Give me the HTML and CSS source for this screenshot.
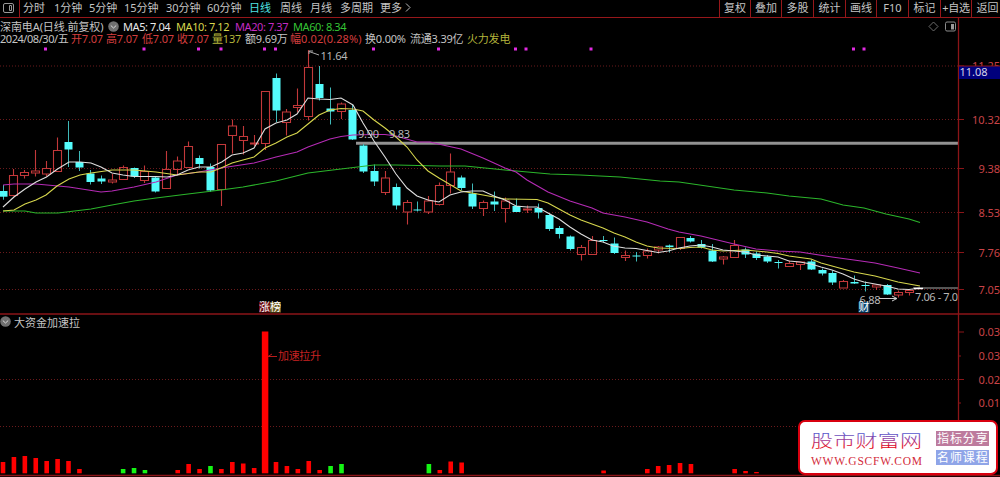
FILE: index.html
```html
<!DOCTYPE html>
<html lang="zh-CN">
<head>
<meta charset="utf-8">
<title>深南电A 日线</title>
<link rel="stylesheet" href="styles.css">
</head>
<body>
<header class="toolbar">
  <div class="panel-toggle"><svg width="12" height="11" viewBox="0 0 12 11"><rect x=".5" y=".5" width="10" height="9" rx="1.5" fill="none" stroke="#999"/><path d="M6.500 2.500h2v5h-2z" fill="none" stroke="#999"/></svg></div>
  <nav class="periods">
    <span class="w31">分时</span><span class="w35">1分钟</span><span class="w35">5分钟</span><span class="w42">15分钟</span><span class="w41">30分钟</span><span class="w42">60分钟</span><span class="w31 active">日线</span><span class="w30">周线</span><span class="w30">月线</span><span class="w40">多周期</span><span class="more">更多<svg width="6" height="9" viewBox="0 0 6 9"><path d="M1 .5l4 4-4 4" fill="none" stroke="#bbb"/></svg></span>
  </nav>
  <div class="tools"><span>复权</span><span>叠加</span><span>多股</span><span>统计</span><span>画线</span><span>F10</span><span>标记</span><span class="pick">+自选</span><span class="last">返回</span></div>
</header>
<main class="board">
  <svg class="chart" width="1000" height="459" viewBox="0 18 1000 459">
    <g id="grid"></g>
    <path d="M356 143.2H958" stroke="#929292" stroke-width="3"/>
    <g id="candles"></g>
    <g class="ma">
      <polyline stroke="#2bb52b" points="3,211 25,211 36,213 58,213 91,209 112,205 134,201 156,198 188,194 221,190 243,187 276,181 308,173 341,169 374,165 396,165 440,166 465,166 505,170 550,174 580,175 620,177 660,181 679,182 734,190 767,193 789,196 821,199 843,205 864,208 886,214 909,219 920,222.5"/>
      <polyline stroke="#b52bb5" points="3,185 14,184 36,184 69,187 101,192 112,191 134,187 156,182 177,175 199,172 221,168 254,163 276,157 297,152 308,147 330,139 341,136.5 353,135 374,134.5 385,134.5 396,136 417,142 430,142 445,145.5 461,149 483,158 505,168 516,172 527,180 548,192 570,201 592,208 603,213 625,217 647,222 668,229 679,232 701,236 734,244 756,249 778,251 800,252 832,257 854,260 875,263 898,268 920,273"/>
      <polyline stroke="#d6d64d" points="3,211 14,210 25,204 36,200 46,195 57,186 69,179 80,175 91,173 112,170 134,170 156,172 177,175 199,172 211,172 221,168 232,163 243,160 254,157 265,148 276,143 287,137 297,133 308,124 319,115 330,110 341,108.5 353,109 363,111 374,120 385,128 396,137 407,147 417,160 428,171 439,178 450,184.5 461,191 483,195 505,199 537,199.5 548,203 559,209 570,215 581,220 603,228 614,233 625,237 636,242 647,246 658,248 679,248.5 690,247.5 701,247 712,250 723,251 745,250 767,252 778,253.5 789,256 811,259 821,263 832,266 843,269 854,272 875,276 898,282 920,286"/>
      <polyline stroke="#dedede" points="3,207 14,197 25,189 36,182 46.5,177 57.5,169 69,162 80,162 91,163 101,167 112,173 123,175 134,176.5 156,176.5 167,177 177,175 188,170 199,167 211,167 221.7,162 232,155 243,153 254,148 265,129 276,123 287,120 297,114 308,98 319,99 330,99.5 341,98 353,105 363,123 374,141 385,157 396,174 407,188 417,196 428,200 439,202 450,195 461,192 472,191 483,191 494,196 505,200 516,206 527,207 537,207 548,213 559,219 570,227 581,234 592,240 603,242 613,246 625,248 636,248.5 647,250.5 658,252.5 668,251 679,248 690,246 701,245 712,247 723,250 734,251 745,252 756,255 767,256 778,257 789,261 800,262 811,264 821,267 832,270 843,274 854,279 864,282 875,284 886,286 898,289 909,289.5 920,288"/>
    </g>
    <path d="M913 288H958" stroke="#aaa"/>
    <path d="M914 288.5H923" stroke="#fff" stroke-width="1.5"/>
    <g id="dots" fill="#e22be2"></g>
    <g class="note">
      <path d="M319 55L309 51.5M309 54V51H313" fill="none" stroke="#aaa"/>
      <text x="320.500" y="60" textLength="27">11.64</text>
      <text x="358" y="138" textLength="21">9.90</text>
      <text x="389" y="138" textLength="21">9.83</text>
      <text x="859.500" y="303.500" textLength="21">6.88</text>
      <path d="M879 298.500H897M892 296l5 2.500-5 2.500" fill="none" stroke="#ccc"/>
      <text x="915" y="301" textLength="43">7.06 - 7.0</text>
    </g>
    <rect x="259" y="302" width="11" height="10.500" fill="#6c0d12"/><rect x="270" y="302" width="11" height="10.500" fill="#6c5a20"/>
    <text class="tag" x="259" y="311">涨</text><text class="tag" x="270" y="311">榜</text>
    <rect x="858.500" y="302" width="11" height="10.500" fill="#0c4b75"/><text class="tag" x="858.500" y="311">财</text>
    <g id="bars"></g>
    <path d="M268 356.500H277M272 354l-4 2.500" fill="none" stroke="#b81c1c"/>
    <text class="signal" x="278" y="359.500" textLength="43">加速拉升</text>
    <g id="axis"></g>
    <path d="M0 314H1000M0 475.500H1000M958.500 18V475" stroke="#8b1518" stroke-width="1.300" fill="none"/>
    <rect x="959" y="66" width="41" height="13" fill="#00007c"/>
    <path d="M959 66H1000" stroke="#8b1518"/>
    <text class="cursor" x="959.500" y="76" textLength="28">11.08</text>
    <path d="M933.500 22l4.500 4.500-4.500 4.500-4.500-4.500z" fill="none" stroke="#6d6d6d"/>
    <rect x="945.500" y="22" width="10" height="9" rx="1.500" fill="none" stroke="#8b8b8b"/><path d="M951 24h3v5.500h-3z" fill="#999"/>
  </svg>
  <div class="info">
    <div class="row">
      <span class="name">深南电A(日线.前复权)</span>
      <svg class="chev" width="11" height="11" viewBox="0 0 11 11"><circle cx="5.500" cy="5.500" r="5.300" fill="#707070"/><path d="M2.800 4.500l2.700 2.500 2.700-2.500" fill="none" stroke="#ddd"/></svg>
      <span class="ma5">MA5: 7.04</span><span class="ma10">MA10: 7.12</span><span class="ma20">MA20: 7.37</span><span class="ma60">MA60: 8.34</span>
    </div>
    <div class="row quote">
      <span class="w71 date">2024/08/30/五</span><span class="w35 up">开7.07</span><span class="w36 up">高7.07</span><span class="w35 up">低7.07</span><span class="w35 up">收7.07</span><span class="w33 vol">量137</span><span class="w45">额9.69万</span><span class="w75 up wide">幅0.02(0.28%)</span><span class="w45">换0.00%</span><span class="w57">流通3.39亿</span><span class="vol">火力发电</span>
    </div>
  </div>
  <div class="subtitle"><svg width="11" height="11" viewBox="0 0 11 11"><circle cx="5.500" cy="5.500" r="5.300" fill="#707070"/><path d="M2.800 4.500l2.700 2.500 2.700-2.500" fill="none" stroke="#ddd"/></svg><span>大资金加速拉</span></div>
  <aside class="brand">
    <svg class="brand-name" width="114" height="42" viewBox="0 0 114 42">
      <defs><linearGradient id="ink" gradientUnits="userSpaceOnUse" x1="0" y1="3" x2="0" y2="19"><stop offset="0" stop-color="#4a5cd8"/><stop offset=".5" stop-color="#a03a96"/><stop offset=".9" stop-color="#e00a20"/></linearGradient></defs>
      <g transform="scale(1.29 1)"><text class="cn" x="0" y="17.500" textLength="86" fill="url(#ink)">股市财富网</text></g>
      <text class="url" x="0" y="36" textLength="111">WWW.GSCFW.COM</text>
    </svg>
    <div class="badges"><span class="share">指标分享</span><span class="course">名师课程</span></div>
  </aside>
</main>
<script src="chart.js"></script>
</body>
</html>
```

FILE: styles.css
```css
* { box-sizing: border-box; }
body { margin: 0; width: 1000px; height: 477px; overflow: hidden; background: #000; color: #c4c4c4; font: 11px/13px "Noto Sans", "Noto Sans CJK SC", sans-serif; }
span { white-space: nowrap; }
.toolbar { display: flex; height: 18px; border-bottom: 1px solid #96171a; }
.panel-toggle { width: 20px; padding: 3px 0 0 3px; border-right: 1px solid #96171a; }
.panel-toggle svg { display: block; }
.periods { display: flex; flex: 1; padding: 1px 0 0 3px; line-height: 14px; }
.active { color: #4fe3e3; }
.more svg { margin-left: 3px; }
.tools { display: grid; grid-template-columns: 31px 31px 32px 32px 31px 32px 32px 31px 29px; width: 281px; line-height: 16px; text-align: center; }
.tools span { border-left: 1px solid #96171a; }
.tools .pick { letter-spacing: -.2px; }
.tools .last { padding-left: 3px; }
.w30 { width: 30px; } .w31 { width: 31px; } .w33 { width: 33px; } .w35 { width: 35px; } .w36 { width: 36px; }
.w40 { width: 40px; } .w41 { width: 41px; } .w42 { width: 42px; } .w45 { width: 45px; } .w57 { width: 57px; }
.w71 { width: 71px; } .w75 { width: 75px; }
.board { position: relative; height: 459px; }
.chart { position: absolute; left: 0; top: 0; }
.info { position: relative; height: 296px; padding-top: 2px; }
.row { display: flex; height: 13px; }
.name { width: 108px; letter-spacing: -.1px; }
.chev { margin: 1px 4px 0 0; }
.ma5, .ma10, .ma20, .ma60 { letter-spacing: -.42px; }
.ma5 { width: 53px; color: #e8e8e8; }
.ma10 { width: 59px; color: #d6d64d; }
.ma20 { width: 58px; color: #c42bc4; }
.ma60 { color: #35c435; }
.quote { letter-spacing: -.2px; padding-bottom: 1px; line-height: 12px; }
.date { letter-spacing: -.45px; }
.wide { letter-spacing: .1px; }
.up { color: #d33e3e; }
.vol { color: #b5b53b; }
.subtitle { position: relative; display: flex; gap: 3px; padding-top: 2px; }
.ma polyline { fill: none; stroke-width: 1.1; }
.note text { fill: #b7b7b7; }
.tag { fill: #fff; font-size: 11px; }
.signal { fill: #c92222; }
.cursor { fill: #d5d5e8; }
.tick-label { fill: #c94347; }
.brand { position: absolute; left: 798px; top: 402px; width: 200px; height: 55px; display: flex; padding: 7px 7px 0 11px; background: #fff; border: 2px solid #d9000f; border-radius: 7px; }
.brand-name { width: 114px; margin-right: 11px; overflow: visible; }
.cn { font: 300 17px "Noto Sans CJK SC", sans-serif; }
.url { font: 11.5px "Liberation Serif", serif; fill: #d32b3b; }
.badges { display: flex; flex-direction: column; gap: 4px; padding-top: 2px; }
.badges span { width: 53px; height: 15px; color: #fff; font: 12px/14px "Noto Sans CJK SC", sans-serif; letter-spacing: .9px; padding-left: 1px; }
.share { background: #bd7b9d; }
.course { background: #8fa5e8; }
```

FILE: chart.js
```js
const NS = "http://www.w3.org/2000/svg";
const STEP = 10.92;
const xOf = i => 3 + STEP * i;

function add(parent, tag, attrs, text) {
  const el = document.createElementNS(NS, tag);
  for (const k in attrs) el.setAttribute(k, attrs[k]);
  if (text) el.textContent = text;
  document.getElementById(parent).appendChild(el);
}

// Grid lines and price scale
[[66, "11.25"], [119.5, "10.32"], [168.5, "9.38"], [212.5, "8.53"], [252.5, "7.76"], [289.5, "7.05"], [379.5, ""], [426.5, ""]].forEach(([y, label]) => {
  add("grid", "path", { d: `M0 ${y}H958`, stroke: "#6b1a1c", "stroke-dasharray": "1 2" });
  if (label) {
    add("axis", "path", { d: `M958 ${y}h6`, stroke: "#8b1518" });
    const wide = label.length > 4;
    add("axis", "text", { class: "tick-label", x: wide ? 972 : 978.5, y: y + 4, textLength: wide ? 28 : 21.5 }, label);
  }
});
[[332, "0.03", 6], [356, "0.03", 3], [379.5, "0.02", 6], [403, "0.01", 3]].forEach(([y, label, len]) => {
  add("axis", "path", { d: `M958 ${y}h${len}`, stroke: "#8b1518" });
  add("axis", "text", { class: "tick-label", x: 978.5, y: y + 4, textLength: 21.5 }, label);
});

// Candles: direction, high, body top, body bottom, low
const candles = `c 185 191 196.7 199.7|r 169 175.5 195.5 196.5|r 170 172.5 175.5 178.5|r 150 171 173 176.5|r 161 168.5 174 176.5|r 137.5 150.5 171.5 172|c 121 142 149.5 167|c 151 162 167.5 171|c 170 173.5 182 184.5|c 175.5 178.5 181.5 184|r 174 180 182 183.5|r 165.5 167.5 179.5 180|c 167.5 168 176.5 178|r 165.5 171.5 180.5 183|c 176.5 177.5 191.5 192.5|r 151 169.5 188.5 189|r 156.5 161 169.5 174|r 141.5 146.5 167.5 168|c 155.5 158 164 168.5|c 163.5 167 190.5 192|r 144.5 144.5 189.5 206|r 119.5 126 135.5 153.5|r 126 136.5 140.5 154.5|r 135 143 144 146|r 91.5 91.5 143.5 150|c 73.5 78 110.5 122|r 109 112 122.5 135.5|r 88.5 105.5 107.5 112.5|r 50 67.5 116.5 120.5|c 66 84 98 100.5|c 87.5 108.5 111.5 124.5|r 102.5 104 111.5 119|c 105 110 139.5 140|c 144 145.5 171.5 173|c 164.5 171 181.5 186|r 171 178 192.5 195|c 183.5 187 205.5 209.5|r 200 202.5 212 224.5|c 201.5 209.5 210.5 211.5|r 196 201 212 214|r 182.5 185.5 204.5 205.5|r 153.5 172 185.5 193.5|c 175.5 177.5 188 190.5|c 183.5 193.5 206.5 209|r 200.5 202.5 208.5 216|c 191.5 201.5 204.5 211|r 197.5 201 208.5 222.5|c 198.5 206 212 212|r 205.5 209 210 213|c 203.5 208 212.5 218.5|c 213.5 215 229 231|c 226 228 234 238.5|c 235.5 236.5 249 250.5|r 245 247.5 254.5 260.5|r 236 240.5 254.5 254.5|c 236 240 241 242.5|c 237.5 243.5 253 254|r 250.5 255.5 257.5 261|c 252 255.5 256.5 261.5|r 248.5 251 255.5 258.5|r 246 247 250 253.5|c 244.5 245.5 247 252.5|r 237.5 237.5 248.5 250|c 236 238 241.5 242.5|c 240 244 247.5 248.5|c 244 250.5 261.5 262|r 256 257 259 264.5|r 240 245.5 257.5 258|c 247.5 249.5 254.5 258|c 251.5 253.5 258 260|c 255 256.5 261.5 263|c 260 262 263 268.5|r 260.5 263.5 266.5 267|r 261.5 262 264.5 270|c 260 261.5 269.5 270|c 268.5 270 273.5 275.5|c 270.5 273 282.5 285|r 280 281.5 288 288.5|c 275.5 282 283.5 284|c 281.5 285 286 291.5|r 284 285 287 290|c 284 285 294.5 295|r 290.5 292.5 295 297.5|r 289.5 290.5 292.5 295.5`;
candles.split("|").forEach((row, i) => {
  const [dir, ...v] = row.split(" ");
  const [high, top, bottom, low] = v.map(Number);
  const x = Math.round(xOf(i) - 0.5) + 0.5;
  if (dir === "c") {
    add("candles", "path", { d: `M${x} ${high}V${low}`, stroke: "#3fb9b9" });
    add("candles", "rect", { x: x - 4, y: top, width: 8, height: bottom - top, fill: "#54fcfc" });
  } else {
    add("candles", "path", { d: `M${x} ${high}V${top}M${x} ${bottom}V${low}M${x - 4} ${top}h8V${bottom}h-8z`, stroke: "#c2383a", fill: "none", "stroke-width": 1.1 });
  }
});

// Marker dots
[45.5, 144, 198.5, 221, 264.5, 275.5, 373.5, 438.5, 515.5, 526, 591, 853.5, 864].forEach(x =>
  add("dots", "rect", { x: x - 1.5, y: 47.5, width: 3, height: 3 }));

// Indicator bars: candle index, top, colour
const bars = "0 462 r|1 457 r|2 456 r|3 458 r|4 461 r|5 459 r|6 461 r|7 469 r|11 469 g|12 468 g|13 470 g|16 470 r|17 464 r|18 469 r|19 466 g|20 469 r|21 462 r|22 463.5 r|23 468 r|24 331.5 r|25 462 r|26 466 r|27 469 r|28 461 r|29 470 r|30 466 g|31 464 g|39 464 g|40 470 r|41 461.5 r|42 462.5 r|55 470.5 r|59 469 r|60 466 r|61 465 r|62 463 r|63 464 r|67 469 r|68 471 r|69 472 r";
bars.split("|").forEach(row => {
  const [i, top, c] = row.split(" ");
  const w = i === "24" ? 6.5 : 4.6;
  add("bars", "rect", { x: xOf(+i) - w / 2, y: top, width: w, height: 473.3 - top, fill: c === "r" ? "#ff0000" : "#14f514" });
});
```
